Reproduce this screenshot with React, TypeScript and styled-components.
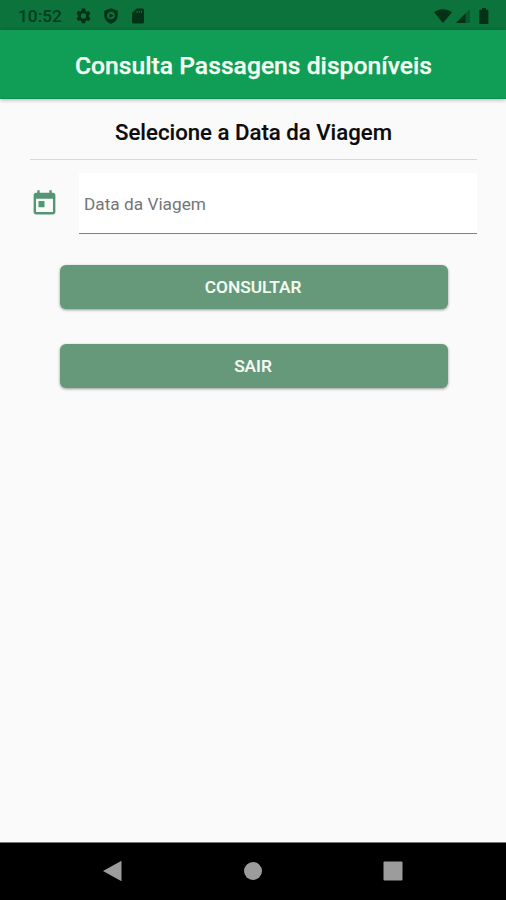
import React from 'react';
import styled, { createGlobalStyle } from 'styled-components';

const GlobalStyle = createGlobalStyle`
  * { box-sizing: border-box; }
  body { margin: 0; background: #fafafa; }
`;

const Screen = styled.div`
  display: flex;
  flex-direction: column;
  width: 506px;
  height: 900px;
  overflow: hidden;
  background: #fafafa;
  font-family: Roboto, 'Liberation Sans', sans-serif;
`;

const StatusBar = styled.div`
  flex: none;
  display: flex;
  align-items: center;
  justify-content: space-between;
  height: 30px;
  padding: 1px 16px 0 18px;
  background: #0c733d;
  color: #033217;
`;

const StatusGroup = styled.div<{ $gap: number }>`
  display: flex;
  align-items: center;
  gap: ${(p) => p.$gap}px;
`;

const Clock = styled.span`
  width: 47px;
  padding-top: 1px;
  color: #043d1c;
  font-size: 17.3px;
  line-height: 20px;
  font-weight: 500;
  white-space: nowrap;
`;

const Icon = styled.svg<{ $w: number; $h: number }>`
  display: block;
  flex: none;
  width: ${(p) => p.$w}px;
  height: ${(p) => p.$h}px;
  fill: currentColor;
`;

const AppBar = styled.header`
  flex: none;
  display: flex;
  align-items: center;
  justify-content: center;
  height: 69px;
  padding: 2px 0 0 1px;
  background: #109d55;
  box-shadow: inset 0 -1px 0 #0d8f4b, 0 1px 4px rgba(0, 0, 0, 0.3);
`;

const Title = styled.h1`
  margin: 0;
  color: #f4fff4;
  font-size: 24.7px;
  line-height: 30px;
  font-weight: 500;
  -webkit-text-stroke: 0.25px currentColor;
  white-space: nowrap;
`;

const Content = styled.main`
  flex: 1;
  display: flex;
  flex-direction: column;
  padding: 0 29px 0 30px;
`;

const Heading = styled.h2`
  margin: 0;
  height: 61px;
  padding-top: 19px;
  border-bottom: 1px solid #d9d9d9;
  color: #0c0c0c;
  font-size: 22.2px;
  line-height: 28px;
  font-weight: 500;
  -webkit-text-stroke: 0.15px currentColor;
  text-align: center;
  white-space: nowrap;
`;

const FieldRow = styled.div`
  display: flex;
  align-items: center;
  gap: 20px;
  height: 61px;
  margin-top: 13px;
  color: #529673;
`;

const Field = styled.div`
  flex: 1;
  display: flex;
  align-items: center;
  height: 61px;
  padding: 2px 0 0 5px;
  border-bottom: 1px solid #808080;
  background: #fff;
  color: #757575;
  font-size: 17.25px;
`;

const Actions = styled.div`
  display: flex;
  flex-direction: column;
  gap: 35px;
  padding: 31px 29px 0 30px;
`;

const ActionButton = styled.button`
  height: 44px;
  padding: 0 2px 1px 0;
  border: 0;
  border-radius: 6px;
  background: #669979;
  box-shadow: 0 1px 3px rgba(0, 0, 0, 0.4);
  color: #f4fbf2;
  font-family: inherit;
  font-size: 17.3px;
  font-weight: 500;
  -webkit-text-stroke: 0.15px currentColor;
`;

const NavBar = styled.nav`
  flex: none;
  display: flex;
  align-items: center;
  justify-content: space-between;
  height: 58px;
  padding: 0 103px 2px 102px;
  border-top: 1px solid #777;
  background: #000;
  color: #9c9c9c;
`;

export default function App() {
  return (
    <Screen>
      <GlobalStyle />
      <StatusBar>
        <StatusGroup $gap={9}>
          <Clock>10:52</Clock>
          <Icon $w={19} $h={18} viewBox="0 0 24 24">
            <path d="M19.14 12.94c.04-.3.06-.61.06-.94s-.02-.64-.07-.94l2.03-1.58a.49.49 0 0 0 .12-.61l-1.92-3.32a.49.49 0 0 0-.59-.22l-2.39.96a7 7 0 0 0-1.62-.94l-.36-2.54A.48.48 0 0 0 13.92 2h-3.84a.47.47 0 0 0-.47.41l-.36 2.54a7.4 7.4 0 0 0-1.62.94l-2.39-.96a.48.48 0 0 0-.59.22L2.74 8.87a.48.48 0 0 0 .12.61l2.03 1.58a6 6 0 0 0-.02 1.88l-2.03 1.58a.49.49 0 0 0-.12.61l1.92 3.32c.12.22.37.29.59.22l2.39-.96c.5.38 1.03.7 1.62.94l.36 2.54c.05.24.24.41.48.41h3.84c.24 0 .44-.17.47-.41l.36-2.54a7 7 0 0 0 1.62-.94l2.39.96c.22.08.47 0 .59-.22l1.92-3.32a.47.47 0 0 0-.12-.61zM12 15.6A3.6 3.6 0 1 1 12 8.4a3.6 3.6 0 0 1 0 7.2z" />
          </Icon>
          <Icon $w={18} $h={18} viewBox="0 0 24 24">
            <path
              fillRule="evenodd"
              d="M12 1.5 3 5v6c0 5.55 3.84 9.7 9 11.5 5.16-1.8 9-5.95 9-11.5V5zM12 6.2a5.1 5.1 0 1 0 0 10.2 5.1 5.1 0 0 0 0-10.2zM10 8.3 15.8 11.5 10 14.7z"
            />
          </Icon>
          <Icon $w={18} $h={18} viewBox="0 0 24 24">
            <path
              fillRule="evenodd"
              d="M18 2h-8L4 8v12c0 1.1.9 2 2 2h12c1.1 0 2-.9 2-2V4c0-1.100-.9-2-2-2zM10 5h1.400v3H10zM13 5h1.400v3H13zM16 5h1.400v3H16z"
            />
          </Icon>
        </StatusGroup>
        <StatusGroup $gap={4}>
          <Icon $w={18} $h={14} viewBox="0 0 18 14">
            <path d="M0 3.2C5 -.8 13 -.8 18 3.2L9 14z" />
          </Icon>
          <Icon $w={14} $h={14} viewBox="0 0 14 14">
            <path opacity=".4" d="M14 0v14H0z" />
            <path d="M9.5 4.5V14H0z" />
          </Icon>
          <Icon $w={16} $h={16} viewBox="0 0 16 16">
            <path d="M8 0h4v1.7h1.4c.6 0 1 .4 1 1V15c0 .6-.4 1-1 1H6.300c-.6 0-1-.4-1-1V2.700c0-.6.4-1 1-1H8z" />
          </Icon>
        </StatusGroup>
      </StatusBar>
      <AppBar>
        <Title>Consulta Passagens disponíveis</Title>
      </AppBar>
      <Content>
        <Heading>Selecione a Data da Viagem</Heading>
        <FieldRow>
          <Icon $w={29} $h={29} viewBox="0 0 24 24">
            <path d="M19 3h-1V1h-2v2H8V1H6v2H5c-1.11 0-1.99.9-1.99 2L3 19c0 1.1.89 2 2 2h14c1.1 0 2-.9 2-2V5c0-1.1-.9-2-2-2zm0 16H5V8h14v11zM7 10h5v5H7z" />
          </Icon>
          <Field>Data da Viagem</Field>
        </FieldRow>
        <Actions>
          <ActionButton>CONSULTAR</ActionButton>
          <ActionButton>SAIR</ActionButton>
        </Actions>
      </Content>
      <NavBar>
        <Icon $w={20} $h={22} viewBox="0 0 20 22">
          <path d="M19.5.8v20.4L1 11z" />
        </Icon>
        <Icon $w={20} $h={20} viewBox="0 0 20 20">
          <circle cx="10" cy="10" r="9" />
        </Icon>
        <Icon $w={20} $h={20} viewBox="0 0 20 20">
          <rect x=".5" y=".5" width="19" height="19" rx="1" />
        </Icon>
      </NavBar>
    </Screen>
  );
}
